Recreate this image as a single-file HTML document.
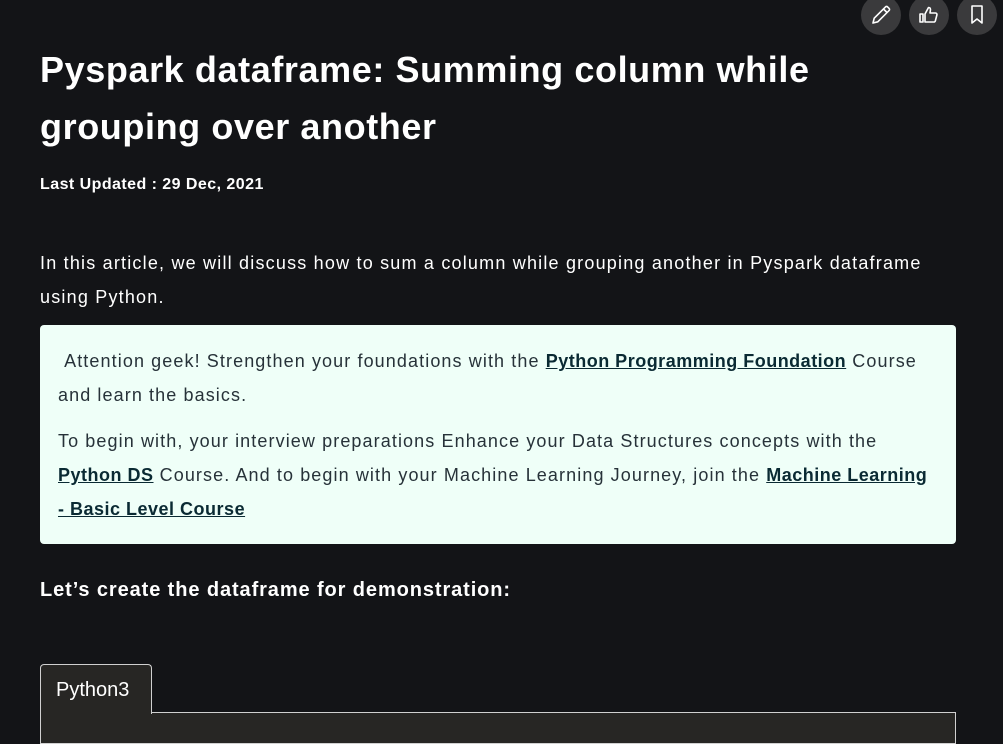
<!DOCTYPE html>
<html><head><meta charset="utf-8"><style>
body{margin:0;width:1003px;height:727px;overflow:hidden;background:#131417;font-family:"Liberation Sans",sans-serif;color:#fff;position:relative}
.c{position:absolute;width:40px;height:40px;border-radius:50%;background:#3a3a3c;top:-5px}
.c svg{position:absolute;left:8px;top:8px}
h1{position:absolute;left:40px;top:41px;margin:0;font-size:36px;line-height:57px;font-weight:bold;width:900px;letter-spacing:0.6px}
.d{position:absolute;left:40px;top:176px;font-size:16px;font-weight:bold;letter-spacing:0.45px}
.p{position:absolute;left:40px;top:246px;font-size:18px;line-height:34px;width:950px;letter-spacing:1.2px;white-space:nowrap}
.box{position:absolute;left:40px;top:325px;width:916px;height:219px;background:#effff8;border-radius:4px;color:#273239;font-size:18px;line-height:34px;letter-spacing:1.1px}
.box p{margin:0 18px;white-space:nowrap}
.box a{color:#0a2a33;font-weight:bold;text-decoration:underline;letter-spacing:0.5px}
.h{position:absolute;left:40px;top:579px;font-size:20px;font-weight:bold;letter-spacing:0.9px}
.tab{position:absolute;left:40px;top:664px;width:110px;height:49px;border:1px solid #d0d0d0;border-bottom:none;border-radius:4px 4px 0 0;background:#272624;font-size:20px;line-height:50px;text-indent:15px;z-index:2}
.code{position:absolute;left:40px;top:712px;width:914px;height:30px;border:1px solid #d0d0d0;background:#272624}
</style></head><body>
<div class="c" style="left:861px"><svg width="24" height="24" viewBox="0 0 24 24" fill="none" stroke="#fff" stroke-width="1.6" stroke-linejoin="round"><path d="M4 20l1.2-4.8L16.5 3.9a1.5 1.5 0 0 1 2.1 0l1.5 1.5a1.5 1.5 0 0 1 0 2.1L8.8 18.8z M14.5 6l3.5 3.5"/></svg></div>
<div class="c" style="left:909px"><svg width="24" height="24" viewBox="0 0 24 24" fill="none" stroke="#fff" stroke-width="1.6" stroke-linejoin="round"><path d="M3 11h3v8H3z M8 11l3.5-6.5c1.8 0 2.3 1.4 1.8 3.5L13 10h5.5c1 0 1.7 1 1.4 2l-1.6 6c-.2.6-.8 1-1.4 1H8z"/></svg></div>
<div class="c" style="left:957px"><svg width="24" height="24" viewBox="0 0 24 24" fill="none" stroke="#fff" stroke-width="1.6" stroke-linejoin="round"><path d="M7 3h10v17l-5-4-5 4z"/></svg></div>
<h1>Pyspark dataframe: Summing column while grouping over another</h1>
<div class="d">Last Updated : 29 Dec, 2021</div>
<div class="p">In this article, we will discuss how to sum a column while grouping another in Pyspark dataframe<br>using Python.</div>
<div class="box"><p style="margin-top:19px">&nbsp;Attention geek! Strengthen your foundations with the <a>Python Programming Foundation</a> Course<br>and learn the basics.</p>
<p style="margin-top:12px">To begin with, your interview preparations Enhance your Data Structures concepts with the<br><a>Python DS</a> Course. And to begin with your Machine Learning Journey, join the <a>Machine Learning<br>- Basic Level Course</a></p></div>
<div class="h">Let’s create the dataframe for demonstration:</div>
<div class="tab">Python3</div>
<div class="code"></div>
</body></html>
